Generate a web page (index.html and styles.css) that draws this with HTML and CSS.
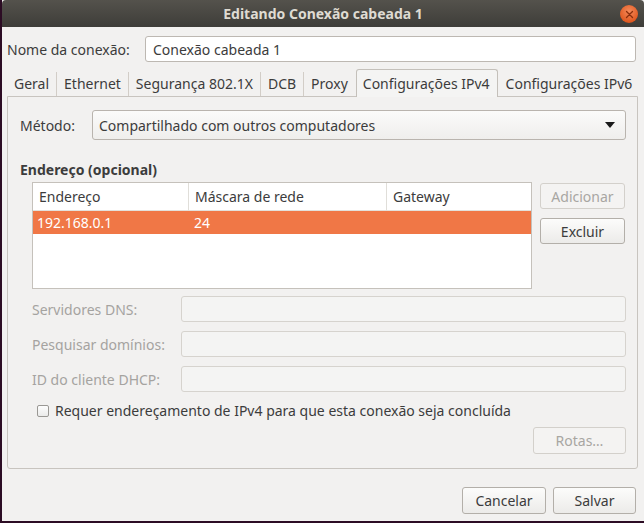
FILE: index.html
```html
<!DOCTYPE html>
<html lang="pt-BR">
<head>
<meta charset="utf-8">
<title>Editando Conexão cabeada 1</title>
<link rel="stylesheet" href="styles.css">
</head>
<body>
<div class="window">
  <header class="titlebar">
    <span class="title">Editando Conexão cabeada 1</span>
    <span class="close"><svg width="9" height="9" viewBox="0 0 9 9"><path d="M1.5 1.5 L7.5 7.5 M7.5 1.5 L1.5 7.5" stroke="#8a2e0c" stroke-width="1.3" stroke-linecap="round"/></svg></span>
  </header>
  <div class="content">
    <div class="name-row">
      <span class="label">Nome da conexão:</span>
      <div class="entry name-entry">Conexão cabeada 1</div>
    </div>
    <div class="tabs">
      <span class="tab">Geral</span>
      <span class="sep"></span>
      <span class="tab">Ethernet</span>
      <span class="sep"></span>
      <span class="tab">Segurança 802.1X</span>
      <span class="sep"></span>
      <span class="tab">DCB</span>
      <span class="sep"></span>
      <span class="tab">Proxy</span>
      <span class="tab active">Configurações IPv4</span>
      <span class="tab">Configurações IPv6</span>
    </div>
    <div class="panel">
      <div class="method-row">
        <span class="label">Método:</span>
        <div class="combo">
          <span>Compartilhado com outros computadores</span>
          <svg width="10" height="6" viewBox="0 0 10 6"><path d="M0 0 H10 L5 6 Z" fill="#1a1a1a"/></svg>
        </div>
      </div>
      <div class="section-title">Endereço (opcional)</div>
      <div class="addr-block">
        <div class="table">
          <div class="thead">
            <span class="c1">Endereço</span>
            <span class="c2">Máscara de rede</span>
            <span class="c3">Gateway</span>
          </div>
          <div class="trow selected">
            <span class="c1">192.168.0.1</span>
            <span class="c2">24</span>
            <span class="c3"></span>
          </div>
        </div>
        <div class="side-buttons">
          <span class="btn disabled">Adicionar</span>
          <span class="btn">Excluir</span>
        </div>
      </div>
      <div class="field-grid">
        <span class="dlabel">Servidores DNS:</span>
        <div class="dentry"></div>
        <span class="dlabel">Pesquisar domínios:</span>
        <div class="dentry"></div>
        <span class="dlabel">ID do cliente DHCP:</span>
        <div class="dentry"></div>
      </div>
      <div class="check-row">
        <span class="checkbox"></span>
        <span>Requer endereçamento de IPv4 para que esta conexão seja concluída</span>
      </div>
      <div class="routes-row">
        <span class="btn disabled routes">Rotas…</span>
      </div>
    </div>
    <div class="actions">
      <span class="btn action">Cancelar</span>
      <span class="btn action">Salvar</span>
    </div>
  </div>
</div>
</body>
</html>
```
FILE: styles.css
```css
* { box-sizing: border-box; }
html, body { margin: 0; padding: 0; }
body {
  background: #2c0c24;
  width: 644px;
  height: 523px;
  padding: 0 0 2px 2px;
  font-family: "Noto Sans", "DejaVu Sans", sans-serif;
  font-size: 14px;
  color: #3c3c3c;
  overflow: hidden;
}
.window {
  width: 642px;
  height: 521px;
  display: flex;
  flex-direction: column;
  background: #f2f1f0;
}
.titlebar {
  height: 27px;
  flex: none;
  background: linear-gradient(#54524c, #3e3d39);
  border-radius: 4px 4px 0 0;
  display: flex;
  align-items: center;
  justify-content: center;
  position: relative;
}
.title {
  color: #dfdbd2;
  font-weight: bold;
  font-size: 14px;
}
.close {
  position: absolute;
  right: 6px;
  top: 5px;
  width: 18px;
  height: 18px;
  border-radius: 50%;
  background: radial-gradient(circle at 50% 35%, #f48a5a, #e05a22 70%, #c8481a);
  display: flex;
  align-items: center;
  justify-content: center;
}
.content {
  flex: 1;
  padding: 9px 8px 0 5px;
  display: flex;
  flex-direction: column;
}
.name-row {
  display: flex;
  align-items: center;
  height: 26px;
}
.name-row .label { width: 138px; flex: none; }
.entry {
  flex: 1;
  height: 26px;
  background: #fff;
  border: 1px solid #bdb8b2;
  border-radius: 3px;
  padding: 0 7px;
  display: flex;
  align-items: center;
}
.tabs {
  display: flex;
  align-items: center;
  margin-top: 7px;
  height: 28px;
  margin-bottom: -1px;
  position: relative;
  z-index: 1;
}
.tab {
  padding: 0 7px;
  height: 28px;
  display: flex;
  align-items: center;
  white-space: nowrap;
}
.sep {
  flex: none;
  width: 1px;
  height: 24px;
  background: #d2cdc7;
  margin-top: 2px;
}
.tab.active {
  background: #f4f4f3;
  border: 1px solid #c4c0ba;
  border-bottom: none;
  border-radius: 3px 3px 0 0;
  margin: 0 1px 0 1px;
  padding: 0 7px 0 6px;
}
.panel {
  flex: none;
  width: 631px;
  height: 373px;
  border: 1px solid #c8c4bf;
  border-radius: 0 0 3px 3px;
  padding: 13px 11px 0 12px;
  display: flex;
  flex-direction: column;
}
.method-row {
  display: flex;
  align-items: center;
  height: 30px;
}
.method-row .label { width: 72px; flex: none; }
.combo {
  flex: 1;
  height: 30px;
  border: 1px solid #b9b4ae;
  border-radius: 3px;
  background: linear-gradient(#fbfbfa, #efeeec);
  display: flex;
  align-items: center;
  justify-content: space-between;
  padding: 0 10px 0 6px;
}
.section-title {
  font-weight: bold;
  margin-top: 20px;
  height: 20px;
  line-height: 20px;
}
.addr-block {
  display: flex;
  margin-top: 2px;
  padding-left: 12px;
  gap: 8px;
}
.table {
  width: 500px;
  height: 107px;
  background: #fff;
  border: 1px solid #c5c1bb;
}
.thead, .trow {
  display: flex;
}
.thead { height: 28px; }
.thead span {
  display: flex;
  align-items: center;
  padding-left: 6px;
  border-right: 1px solid #e0ded9;
  border-bottom: 1px solid #e3e1dc;
}
.thead span:last-child { border-right: none; }
.c1 { width: 156px; }
.c2 { width: 198px; }
.c3 { flex: 1; }
.trow { height: 23px; }
.trow span {
  display: flex;
  align-items: center;
  padding-left: 4px;
}
.trow .c2 { padding-left: 5px; }
.trow.selected { background: #f07746; color: #fff; }
.side-buttons {
  display: flex;
  flex-direction: column;
  gap: 9px;
  width: 85px;
  padding-top: 1px;
}
.btn {
  height: 26px;
  border: 1px solid #b3afa9;
  border-radius: 3px;
  background: linear-gradient(#fcfcfb, #ecebe9);
  display: flex;
  align-items: center;
  justify-content: center;
  white-space: nowrap;
}
.btn.disabled {
  color: #a8a6a2;
  border-color: #d3d0cb;
  background: #f4f3f2;
}
.field-grid {
  display: grid;
  grid-template-columns: 149px 1fr;
  row-gap: 9px;
  margin-top: 7px;
  padding-left: 12px;
  align-items: center;
}
.dlabel { color: #a5a3a0; white-space: nowrap; }
.dentry {
  height: 26px;
  border: 1px solid #d6d3ce;
  border-radius: 3px;
  background: #f4f4f3;
}
.check-row {
  display: flex;
  align-items: center;
  margin-top: 10px;
  padding-left: 17px;
  gap: 6px;
  height: 17px;
}
.checkbox {
  width: 12px;
  height: 12px;
  border: 1px solid #9a9894;
  border-radius: 2px;
  background: linear-gradient(#fdfdfd, #ebebea);
}
.routes-row {
  display: flex;
  justify-content: flex-end;
  margin-top: 8px;
}
.routes { width: 93px; height: 27px; }
.actions {
  display: flex;
  justify-content: flex-end;
  gap: 7px;
  margin-top: 18px;
}
.action { width: 84px; height: 27px; }
.action:last-child { width: 83px; }
```
